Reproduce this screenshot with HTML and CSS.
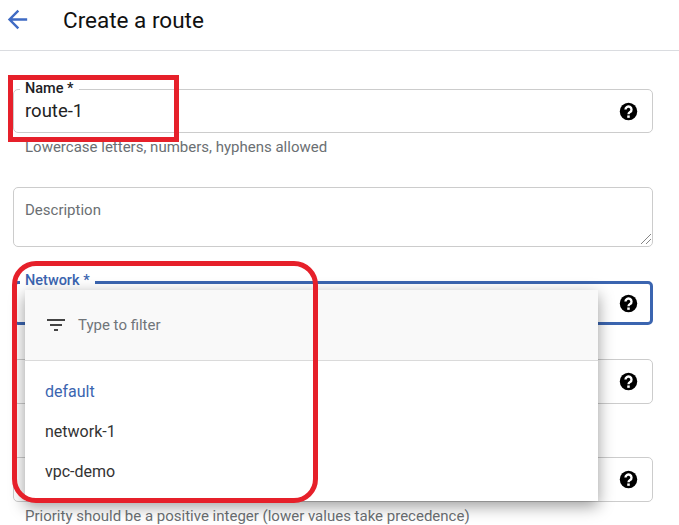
FILE: index.html
```html
<!DOCTYPE html>
<html lang="en">
<head>
  <meta charset="UTF-8">
  <title>Create a route</title>
  <link rel="stylesheet" href="styles.css">
</head>
<body>
  <!-- Shared help icon -->
  <svg class="icon-defs" width="0" height="0">
    <symbol id="help" viewBox="0 0 24 24">
      <circle cx="12" cy="12" r="11" fill="#000"/>
      <path d="M8.200 9.500a3.800 3.800 0 1 1 5.800 3.200c-1.300.8-2 1.300-2 2.800" fill="none" stroke="#fff" stroke-width="3"/>
      <rect x="10.400" y="17" width="3.200" height="3" fill="#fff"/>
    </symbol>
  </svg>

  <!-- Page header -->
  <header class="page-header">
    <svg class="back-icon" width="29" height="29" viewBox="0 0 24 24"><path d="M20 11H7.800l5.600-5.600L12 4l-8 8 8 8 1.400-1.400L7.800 13H20z"/></svg>
    <h1>Create a route</h1>
  </header>

  <!-- Form -->
  <form class="route-form">
    <div class="field field-name">
      <span class="field-label">Name *</span>
      <span class="field-value">route-1</span>
      <svg class="help-icon"><use href="#help"/></svg>
    </div>
    <p class="hint hint-name">Lowercase letters, numbers, hyphens allowed</p>

    <div class="field field-description">
      <span class="placeholder">Description</span>
      <svg class="resize-grip" width="12" height="12" viewBox="0 0 12 12"><path d="M1 11 11 1M6 11l5-5"/></svg>
    </div>

    <div class="field field-network">
      <span class="field-label">Network *</span>
      <svg class="help-icon"><use href="#help"/></svg>
    </div>

    <div class="field field-next">
      <svg class="help-icon"><use href="#help"/></svg>
    </div>

    <div class="field field-priority">
      <svg class="help-icon"><use href="#help"/></svg>
    </div>
    <p class="hint">Priority should be a positive integer (lower values take precedence)</p>
  </form>

  <!-- Network dropdown -->
  <div class="dropdown">
    <div class="dropdown-filter">
      <svg class="filter-icon" width="24" height="24" viewBox="0 0 24 24"><path d="M10 18h4v-2h-4zM3 6v2h18V6zm3 7h12v-2H6z"/></svg>
      <span>Type to filter</span>
    </div>
    <ul class="dropdown-list">
      <li class="selected">default</li>
      <li>network-1</li>
      <li>vpc-demo</li>
    </ul>
  </div>

  <!-- Red annotations on top of the screenshot -->
  <div class="mark mark-name"></div>
  <div class="mark mark-network"></div>
</body>
</html>
```

FILE: styles.css
```css
/* General Styles */
html, body {
  height: 525px;
  overflow: hidden;
}

body {
  margin: 0;
  position: relative;
  font-family: Roboto, 'Liberation Sans', Arial, sans-serif;
  background-color: #fff;
  color: #202124;
}

.icon-defs {
  position: absolute;
}

/* Page header */
.page-header {
  height: 51px;
  box-sizing: border-box;
  padding: 0 0 11px 3px;
  border-bottom: 1px solid #dadce0;
  display: flex;
  align-items: center;
}

.back-icon {
  flex: none;
  fill: #3f6bc4;
}

.page-header h1 {
  margin: 0 0 0 31px;
  font-size: 22.5px;
  font-weight: 400;
  color: #111;
}

/* Form */
.route-form {
  padding: 38px 26px 0 13px;
}

.field {
  position: relative;
  box-sizing: border-box;
  border: 1px solid #ccc;
  border-radius: 5px;
  display: flex;
  align-items: center;
  justify-content: flex-end;
  padding: 0 14px 0 11px;
}

.field-name {
  height: 44px;
  justify-content: space-between;
}

.field-description {
  height: 60px;
  margin-top: 31px;
}

.field-network {
  height: 44px;
  margin-top: 34px;
  border: 3px solid #3b65b0;
  padding-right: 12px;
}

.field-next {
  height: 45px;
  margin-top: 34px;
}

.field-priority {
  height: 45px;
  margin-top: 53px;
}

.field-label {
  position: absolute;
  top: -10px;
  left: 6px;
  padding: 0 5px;
  background-color: #fff;
  font-size: 14.5px;
  line-height: 18px;
  font-weight: 500;
  color: #202124;
}

.field-network .field-label {
  top: -12px;
  left: 4px;
  color: #3b65b0;
}

.field-value {
  font-size: 18.5px;
  line-height: 24px;
  color: #222;
}

.placeholder {
  position: absolute;
  top: 12px;
  left: 11px;
  font-size: 15px;
  line-height: 20px;
  color: #6b6f73;
}

.help-icon {
  flex: none;
  width: 19px;
  height: 19px;
}

.resize-grip {
  position: absolute;
  right: 0;
  bottom: 1px;
  fill: none;
  stroke: #666;
  stroke-width: 0.8;
}

.hint {
  margin: 6px 0 0 12px;
  font-size: 15px;
  line-height: 17px;
  color: #6b6f73;
}

/* Network dropdown */
.dropdown {
  position: absolute;
  top: 290px;
  left: 25px;
  width: 573px;
  height: 211px;
  background-color: #fff;
  box-shadow: 0 5px 15px rgba(0, 0, 0, 0.4);
  font-size: 16px;
}

.dropdown-filter {
  height: 71px;
  box-sizing: border-box;
  padding-left: 19px;
  background-color: #f9f9f9;
  border-bottom: 1px solid #dadada;
  display: flex;
  align-items: center;
  gap: 10px;
  font-size: 15px;
  color: #70757a;
}

.filter-icon {
  fill: #444;
}

.dropdown-list {
  margin: 0;
  padding: 11px 0 0 20px;
  list-style: none;
}

.dropdown-list li {
  height: 40px;
  line-height: 40px;
  color: #333;
}

.dropdown-list .selected {
  color: #3b65b0;
}

/* Red annotations */
.mark {
  position: absolute;
  box-sizing: border-box;
  border: 5px solid #e6202a;
}

.mark-name {
  top: 75px;
  left: 8px;
  width: 171px;
  height: 67px;
}

.mark-network {
  top: 261px;
  left: 12px;
  width: 306px;
  height: 242px;
  border-radius: 24px;
}
```
